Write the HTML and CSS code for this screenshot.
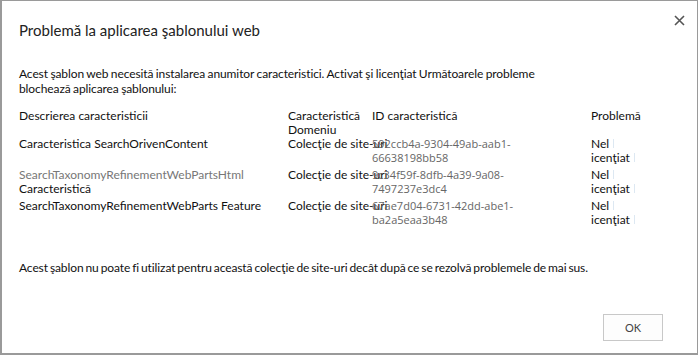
FILE: index.html
```html
<!DOCTYPE html>
<html lang="ro">
<head>
<meta charset="utf-8">
<title>Problemă la aplicarea şablonului web</title>
<link rel="stylesheet" href="styles.css">
</head>
<body>
<div class="dialog">
  <div class="header">
    <h1 class="title">Problemă la aplicarea şablonului web</h1>
    <button class="close" aria-label="Închide">
      <svg width="11" height="11" viewBox="0 0 11 11"><path d="M1 1 L10 10 M10 1 L1 10" stroke="#555" stroke-width="1.6" fill="none"/></svg>
    </button>
  </div>
  <p class="intro">Acest şablon web necesită instalarea anumitor caracteristici. Activat şi licenţiat Următoarele probleme blochează aplicarea şablonului:</p>
  <div class="grid">
    <div class="c name">Descrierea caracteristicii</div>
    <div class="c scope">Caracteristică Domeniu</div>
    <div class="c id head">ID caracteristică</div>
    <div class="c prob">Problemă</div>

    <div class="c name">Caracteristica SearchOrivenContent</div>
    <div class="c scope nowrap">Colecţie de site-uri</div>
    <div class="c id">592ccb4a-9304-49ab-aab1-<br>66638198bb58</div>
    <div class="c prob">Nel<span class="mark"></span><br>icenţiat<span class="mark"></span></div>

    <div class="c name"><span class="muted">SearchTaxonomyRefinementWebPartsHtml</span><br>Caracteristică</div>
    <div class="c scope nowrap">Colecţie de site-uri</div>
    <div class="c id">9c34f59f-8dfb-4a39-9a08-<br>7497237e3dc4</div>
    <div class="c prob">Nel<span class="mark"></span><br>icenţiat<span class="mark"></span></div>

    <div class="c name">SearchTaxonomyRefinementWebParts Feature</div>
    <div class="c scope nowrap">Colecţie de site-uri</div>
    <div class="c id">67ae7d04-6731-42dd-abe1-<br>ba2a5eaa3b48</div>
    <div class="c prob">Nel<span class="mark"></span><br>icenţiat<span class="mark"></span></div>
  </div>
  <p class="note">Acest şablon nu poate fi utilizat pentru această colecţie de site-uri decât după ce se rezolvă problemele de mai sus.</p>
  <div class="actions">
    <button class="ok">OK</button>
  </div>
</div>
</body>
</html>
```
FILE: styles.css
```css
html, body {
  margin: 0;
  padding: 0;
  background: #ffffff;
}
body {
  font-family: Lato, "Liberation Sans", Arial, sans-serif;
  color: #222;
  width: 700px;
  height: 356px;
  overflow: hidden;
}
.dialog {
  box-sizing: border-box;
  width: 698px;
  height: 355px;
  border: 1px solid #9a9a9a;
  border-left-width: 2px;
  border-bottom-width: 2px;
  display: flex;
  flex-direction: column;
}
.header {
  display: flex;
  justify-content: space-between;
  align-items: flex-start;
  padding: 19px 12px 0 17px;
}
.title {
  margin: 0;
  font-weight: normal;
  font-size: 15px;
  line-height: 20px;
  color: #222;
}
.close {
  border: 0;
  background: none;
  padding: 0;
  margin: -5px 0 0 0;
  width: 11px;
  height: 11px;
  display: flex;
}
.intro {
  width: 545px;
  margin: 26px 0 0 17px;
  font-size: 12px;
  line-height: 15px;
  letter-spacing: -0.1px;
  word-spacing: -0.5px;
  color: #111;
}
.grid {
  display: grid;
  grid-template-columns: 269px 84px 219px 1fr;
  margin: 13px 0 0 17px;
  font-size: 12px;
  line-height: 14px;
  color: #111;
}
.c {
  padding-bottom: 3px;
}
.grid .c:nth-child(-n+4) {
  padding-bottom: 0;
}
.nowrap {
  white-space: nowrap;
}
.id {
  color: #666;
  font-family: "Open Sans", sans-serif;
  font-size: 11px;
}
.id.head {
  color: #111;
  font-family: Lato, "Liberation Sans", Arial, sans-serif;
  font-size: 12px;
}
.muted {
  color: #777;
}
.mark {
  display: inline-block;
  width: 1px;
  height: 9px;
  margin-left: 4px;
  background: #dde8f2;
}
.note {
  margin: 31px 0 0 17px;
  font-size: 12px;
  line-height: 14px;
  letter-spacing: -0.1px;
  word-spacing: -1px;
  color: #111;
}
.actions {
  display: flex;
  justify-content: flex-end;
  padding: 39px 34px 0 0;
}
.ok {
  width: 60px;
  height: 27px;
  border: 1px solid #c8c8c8;
  background: #fdfdfd;
  font-family: Lato, "Liberation Sans", Arial, sans-serif;
  font-size: 11px;
  color: #444;
  padding: 0;
}
```
